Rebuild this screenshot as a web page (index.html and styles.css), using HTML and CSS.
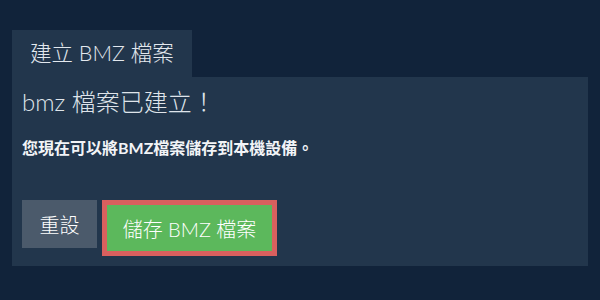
FILE: index.html
```html
<!DOCTYPE html>
<html lang="zh-Hant">
<head>
<meta charset="utf-8">
<link rel="stylesheet" href="styles.css">
</head>
<body>
<div class="page">
  <div class="tab">建立 BMZ 檔案</div>
  <div class="panel">
    <h2 class="title">bmz 檔案已建立！</h2>
    <p class="desc">您現在可以將BMZ檔案儲存到本機設備。</p>
    <div class="actions">
      <button class="btn btn-reset">重設</button>
      <button class="btn btn-save">儲存 BMZ 檔案</button>
    </div>
  </div>
</div>
</body>
</html>
```
FILE: styles.css
```css
html, body {
  margin: 0;
  padding: 0;
  background: #11233a;
  width: 600px;
  height: 300px;
  overflow: hidden;
}
body {
  font-family: Lato, "Noto Sans CJK TC", sans-serif;
  color: #e6ebf0;
}
.page {
  padding: 30px 12px 0 12px;
}
.tab {
  width: 162px;
  height: 47px;
  padding-left: 18px;
  background: #22364c;
  font-size: 21.5px;
  font-weight: 300;
  line-height: 47px;
  color: #e3e8ee;
}
.panel {
  background: #22364c;
  padding: 10px 10px 10px 10px;
}
.title {
  margin: 0;
  font-weight: 300;
  font-size: 24px;
  line-height: 30px;
  color: #dfe4ea;
}
.desc {
  margin: 21px 0 0 0;
  font-size: 16px;
  font-weight: 700;
  line-height: 20px;
  color: #f2f4f7;
}
.actions {
  display: flex;
  align-items: flex-start;
  gap: 5px;
  margin-top: 42px;
}
.btn {
  font-family: Lato, "Noto Sans CJK TC", sans-serif;
  border: none;
  margin: 0;
  padding: 0;
  color: #ffffff;
  font-size: 20px;
  font-weight: 300;
  cursor: pointer;
}
.btn-reset {
  width: 75px;
  height: 48px;
  background: #4b5a6b;
}
.btn-save {
  width: 175px;
  height: 56px;
  background: #5cb85c;
  border: 5px solid #d9605e;
}
```
